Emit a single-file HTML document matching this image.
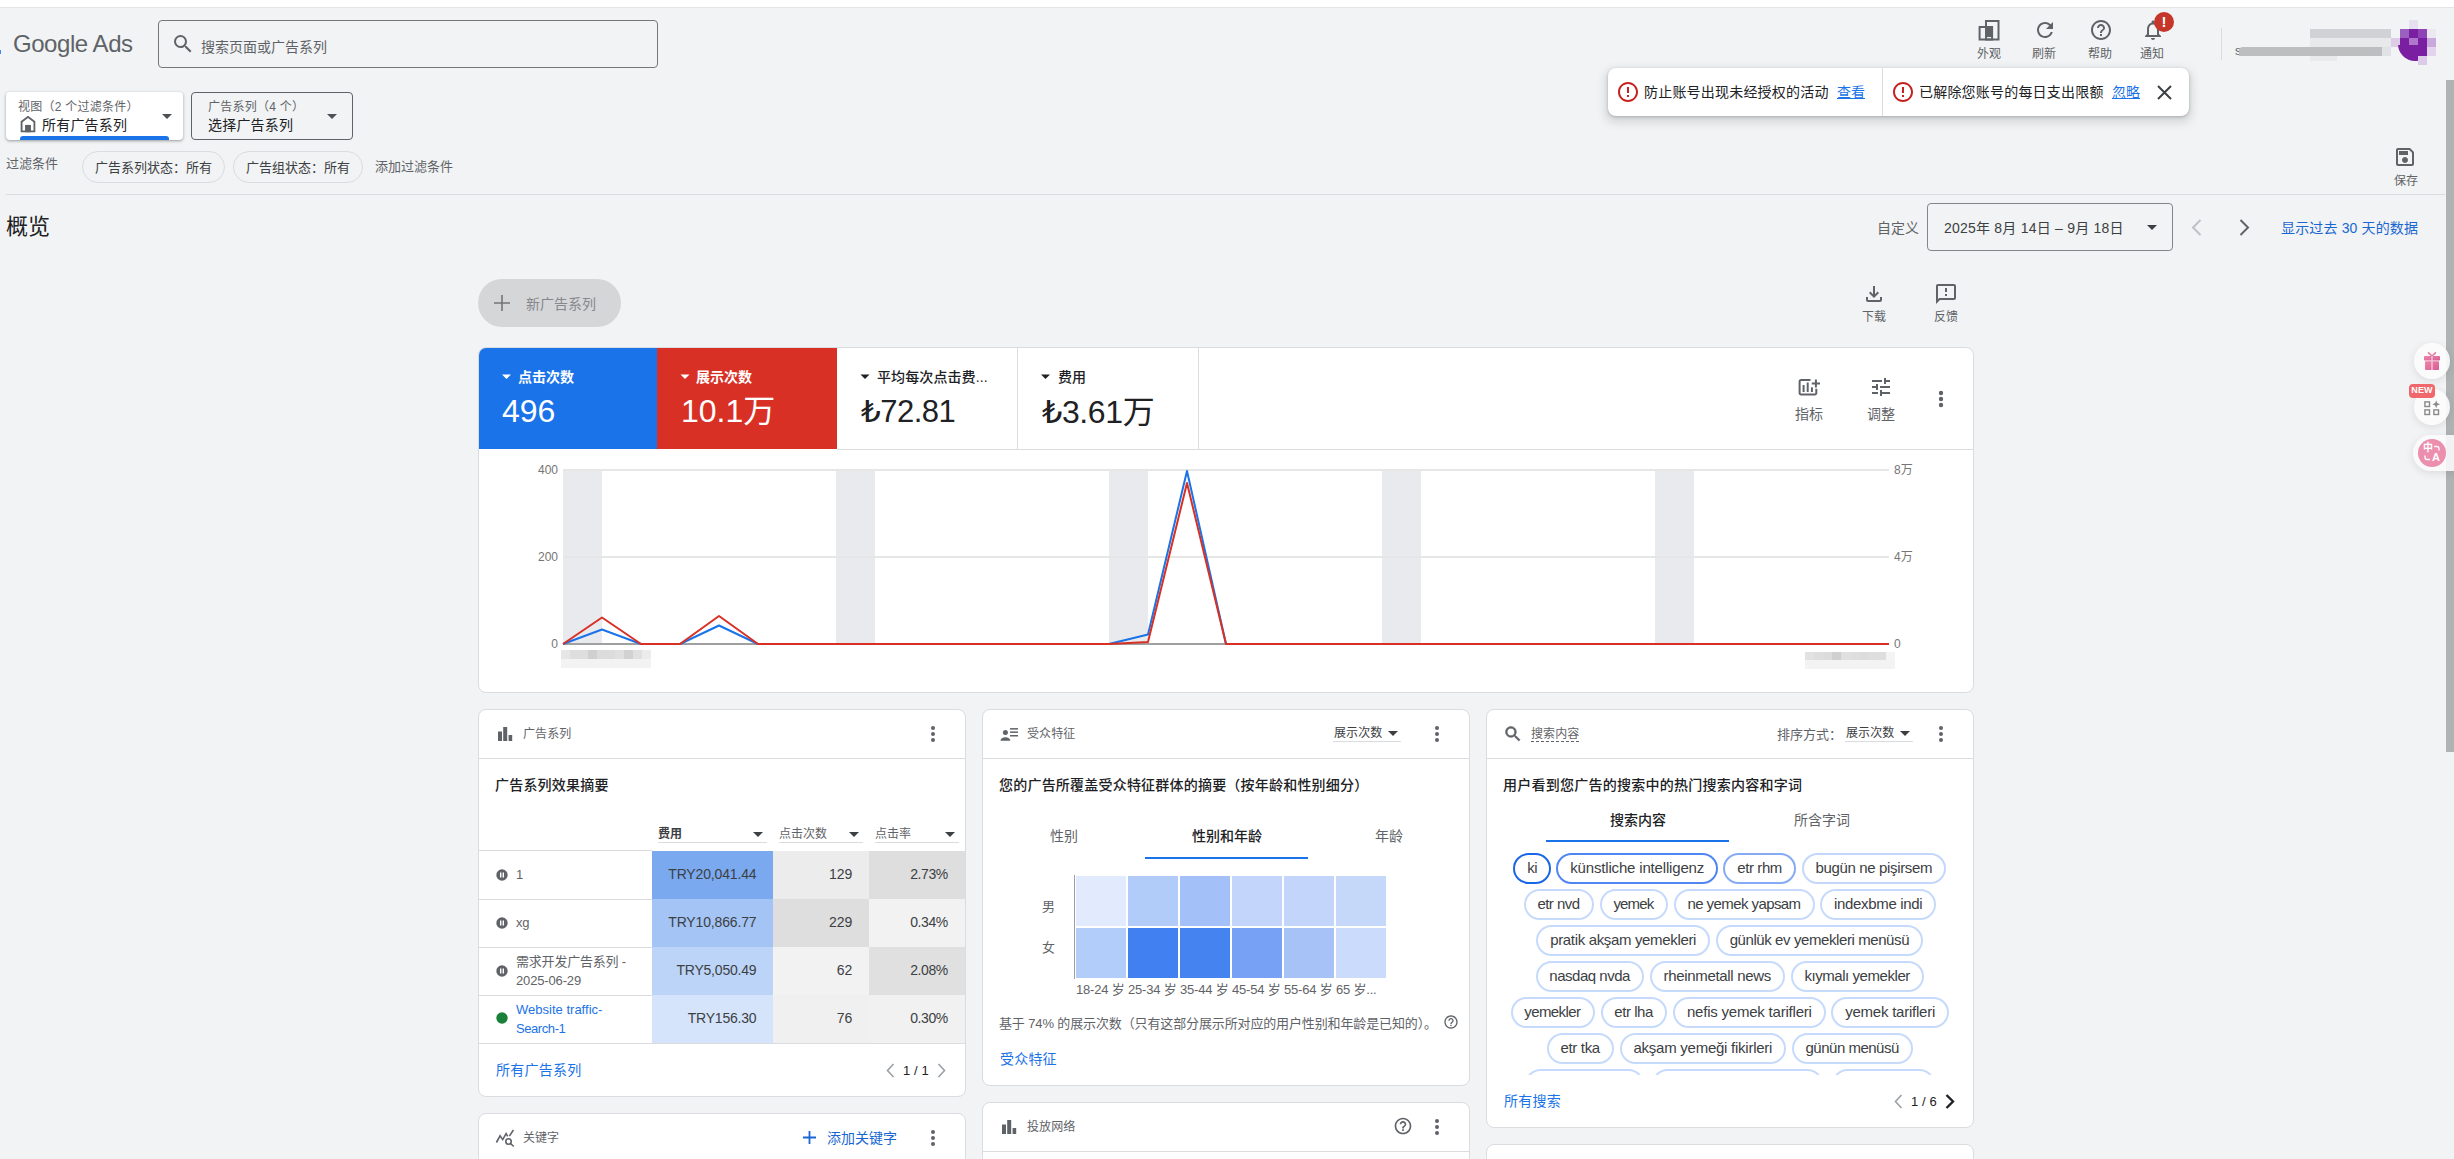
<!DOCTYPE html>
<html lang="zh-CN">
<head>
<meta charset="utf-8">
<title>Google Ads - 概览</title>
<style>
*{box-sizing:border-box;margin:0;padding:0}
html,body{width:2454px;height:1159px;overflow:hidden;background:#f1f3f4}
body{font-family:"Liberation Sans","Noto Sans CJK SC",sans-serif;color:#202124;font-size:14px;position:relative}
.abs{position:absolute}
.t{position:absolute;white-space:nowrap;line-height:1}
.g{color:#5f6368}
.b{color:#1967d2}
.card{position:absolute;background:#fff;border:1px solid #dadce0;border-radius:8px;overflow:hidden}
svg{position:absolute;overflow:visible}
.hr{position:absolute;height:1px;background:#dadce0}
.vr{position:absolute;width:1px;background:#dadce0}
.chip{position:absolute;height:32px;border:1px solid #dadce0;border-radius:16px;font-size:13px;line-height:31px;text-align:center;color:#3c4043;white-space:nowrap}
.tag{position:absolute;height:31px;border:2px solid #c6dafc;border-radius:16px;font-size:15px;line-height:25px;text-align:center;color:#3c4043;white-space:nowrap;background:#fff}
</style>
</head>
<body>
<!-- top browser strip -->
<div class="abs" style="left:0;top:0;width:2454px;height:7px;background:#fff"></div>
<div class="abs" style="left:0;top:7px;width:2454px;height:1px;background:#e3e5e8"></div>

<!-- HEADER -->
<div id="header">
<div class="t g" style="left:13px;top:32px;font-size:24px;letter-spacing:-0.45px">Google Ads</div>
<div class="abs" style="left:158px;top:20px;width:500px;height:48px;border:1px solid #747775;border-radius:4px"></div>
<svg style="left:171px;top:32px" width="24" height="24" viewBox="0 0 24 24"><path fill="#5f6368" d="M15.5 14h-.79l-.28-.27A6.47 6.47 0 0 0 16 9.5 6.5 6.5 0 1 0 9.5 16c1.61 0 3.09-.59 4.23-1.57l.27.28v.79l5 4.99L20.49 19l-4.99-5zm-6 0C7.01 14 5 11.99 5 9.5S7.01 5 9.5 5 14 7.01 14 9.5 11.99 14 9.5 14z"/></svg>
<div class="t g" style="left:201px;top:40px;font-size:14px">搜索页面或广告系列</div>
</div>

<!-- VIEW SELECTORS -->
<div id="selectors">
<div class="abs" style="left:6px;top:92px;width:177px;height:48px;background:#fff;border-radius:4px;box-shadow:0 1px 2px rgba(60,64,67,.3),0 1px 3px 1px rgba(60,64,67,.15)"></div>
<div class="t g" style="left:18px;top:101px;font-size:12px;letter-spacing:0.25px">视图（2 个过滤条件）</div>
<div class="t" style="left:42px;top:118px;font-size:14px;letter-spacing:0.2px">所有广告系列</div>
<div class="abs" style="left:20px;top:136px;width:149px;height:4px;background:#1a73e8;border-radius:3px 3px 0 0"></div>
<div class="abs" style="left:191px;top:92px;width:162px;height:48px;border:1px solid #5f6368;border-radius:4px"></div>
<div class="t g" style="left:208px;top:101px;font-size:12px;letter-spacing:0.25px">广告系列（4 个）</div>
<div class="t" style="left:208px;top:118px;font-size:14px;letter-spacing:0.2px">选择广告系列</div>
<svg style="left:17px;top:113px" width="22" height="22" viewBox="0 0 24 24"><path fill="#5f6368" d="M12 3 4 9v12h16V9l-8-6zm6 16h-3v-6H9v6H6v-9l6-4.5 6 4.5v9z"/><rect x="9" y="13" width="6" height="8" fill="#5f6368"/></svg>
<svg style="left:162px;top:114px" width="10" height="5" viewBox="0 0 10 5"><path fill="#4d5156" d="M0 0h10L5 5z"/></svg>
<svg style="left:327px;top:114px" width="10" height="5" viewBox="0 0 10 5"><path fill="#4d5156" d="M0 0h10L5 5z"/></svg>
</div>

<!-- FILTER ROW -->
<div id="filters">
<div class="t g" style="left:6px;top:157px;font-size:13px">过滤条件</div>
<div class="chip" style="left:82px;top:151px;width:143px">广告系列状态：所有</div>
<div class="chip" style="left:233px;top:151px;width:130px">广告组状态：所有</div>
<div class="t g" style="left:375px;top:160px;font-size:13px">添加过滤条件</div>
<div class="hr" style="left:6px;top:194px;width:2439px"></div>
<div class="t" style="left:6px;top:216px;font-size:22px">概览</div>
</div>

<div id="rheader">
<!-- 外观 -->
<svg style="left:1978px;top:20px" width="22" height="21" viewBox="0 0 22 21"><g fill="none" stroke="#5f6368" stroke-width="2"><rect x="8" y="1" width="12.5" height="18.5"/><rect x="1.6" y="7" width="12.5" height="12.5"/></g><rect x="8" y="7" width="6.2" height="10" fill="#5f6368"/></svg>
<div class="t g" style="left:1977px;top:48px;font-size:12px">外观</div>
<!-- 刷新 -->
<svg style="left:2033px;top:18px" width="24" height="24" viewBox="0 0 24 24"><path fill="#5f6368" d="M17.65 6.35A7.958 7.958 0 0 0 12 4c-4.42 0-7.99 3.58-7.99 8s3.57 8 7.99 8c3.73 0 6.84-2.55 7.73-6h-2.08A5.99 5.99 0 0 1 12 18c-3.31 0-6-2.69-6-6s2.69-6 6-6c1.66 0 3.14.69 4.22 1.78L13 11h7V4l-2.35 2.35z"/></svg>
<div class="t g" style="left:2032px;top:48px;font-size:12px">刷新</div>
<!-- 帮助 -->
<svg style="left:2089px;top:18px" width="24" height="24" viewBox="0 0 24 24"><path fill="#5f6368" d="M11 18h2v-2h-2v2zm1-16C6.48 2 2 6.48 2 12s4.48 10 10 10 10-4.480 10-10S17.52 2 12 2zm0 18c-4.41 0-8-3.590-8-8s3.590-8 8-8 8 3.590 8 8-3.590 8-8 8zm0-14c-2.210 0-4 1.790-4 4h2c0-1.100.9-2 2-2s2 .9 2 2c0 2-3 1.750-3 5h2c0-2.250 3-2.500 3-5 0-2.210-1.790-4-4-4z"/></svg>
<div class="t g" style="left:2088px;top:48px;font-size:12px">帮助</div>
<!-- 通知 -->
<svg style="left:2141px;top:18px" width="24" height="24" viewBox="0 0 24 24"><path fill="#5f6368" d="M12 22c1.100 0 2-.9 2-2h-4c0 1.100.9 2 2 2zm6-6v-5c0-3.070-1.630-5.640-4.500-6.320V4c0-.83-.67-1.500-1.500-1.500s-1.500.67-1.500 1.500v.68C7.640 5.360 6 7.920 6 11v5l-2 2v1h16v-1l-2-2zm-2 1H8v-6c0-2.480 1.510-4.500 4-4.500s4 2.020 4 4.500v6z"/></svg>
<div class="abs" style="left:2154px;top:12px;width:20px;height:20px;border-radius:50%;background:#c5352a"></div>
<div class="t" style="left:2154px;top:14px;width:20px;text-align:center;color:#fff;font-size:15px;font-weight:bold">!</div>
<div class="t g" style="left:2140px;top:48px;font-size:12px">通知</div>
<div class="vr" style="left:2221px;top:28px;height:32px"></div>
<!-- blurred account -->
<div class="t g" style="left:2235px;top:45px;font-size:12px">s</div>
<div class="abs" style="left:2239px;top:47px;width:143px;height:9px;background:#bdbec0;border-radius:4px 0 0 0"></div>
<div class="abs" style="left:2382px;top:47px;width:9px;height:9px;background:#e1e2e5"></div>
<div class="abs" style="left:2310px;top:29px;width:81px;height:9px;background:#d0d2d5"></div>
<div class="abs" style="left:2310px;top:38px;width:81px;height:9px;background:#e8e9ea"></div>
<div class="abs" style="left:2310px;top:56px;width:27px;height:5px;background:#e8eaeb"></div>
<!-- avatar mosaic -->
<div class="abs" style="left:2409px;top:20px;width:9px;height:9px;background:#e6dff0"></div>
<div class="abs" style="left:2400px;top:29px;width:9px;height:9px;background:#9b5fc0"></div>
<div class="abs" style="left:2409px;top:29px;width:9px;height:9px;background:#7b1fa2"></div>
<div class="abs" style="left:2418px;top:29px;width:9px;height:9px;background:#8e44b4"></div>
<div class="abs" style="left:2427px;top:29px;width:9px;height:9px;background:#ece8f2"></div>
<div class="abs" style="left:2391px;top:38px;width:9px;height:9px;background:#dccce8"></div>
<div class="abs" style="left:2400px;top:38px;width:9px;height:9px;background:#7b1fa2"></div>
<div class="abs" style="left:2409px;top:38px;width:9px;height:9px;background:#ae77cb"></div>
<div class="abs" style="left:2418px;top:38px;width:9px;height:18px;background:#7b1fa2"></div>
<div class="abs" style="left:2427px;top:38px;width:9px;height:9px;background:#c9a8dc"></div>
<div class="abs" style="left:2427px;top:47px;width:9px;height:9px;background:#e2d4ec"></div>
<div class="abs" style="left:2418px;top:56px;width:9px;height:9px;background:#dccbe8"></div>
<div class="abs" style="left:2398px;top:45px;width:20px;height:16px;overflow:hidden"><div class="abs" style="left:0;top:-18px;width:34px;height:34px;border-radius:50%;background:#7b1fa2"></div></div>
<!-- toast -->
<div class="abs" style="left:1608px;top:68px;width:581px;height:48px;background:#fff;border-radius:8px;box-shadow:0 1px 3px rgba(60,64,67,.3),0 4px 8px 3px rgba(60,64,67,.15)"></div>
<div class="vr" style="left:1882px;top:68px;height:48px"></div>
<svg style="left:1616px;top:80px" width="24" height="24" viewBox="0 0 24 24"><path fill="#c5221f" d="M11 15h2v2h-2zm0-8h2v6h-2zm.99-5C6.47 2 2 6.48 2 12s4.47 10 9.990 10C17.520 22 22 17.520 22 12S17.520 2 11.990 2zM12 20c-4.420 0-8-3.580-8-8s3.580-8 8-8 8 3.580 8 8-3.580 8-8 8z"/></svg>
<div class="t" style="left:1644px;top:85px;font-size:14px;letter-spacing:0.2px">防止账号出现未经授权的活动</div>
<div class="t" style="left:1837px;top:85px;font-size:14px;color:#1a73e8;text-decoration:underline">查看</div>
<svg style="left:1891px;top:80px" width="24" height="24" viewBox="0 0 24 24"><path fill="#c5221f" d="M11 15h2v2h-2zm0-8h2v6h-2zm.99-5C6.47 2 2 6.48 2 12s4.47 10 9.990 10C17.520 22 22 17.520 22 12S17.520 2 11.990 2zM12 20c-4.420 0-8-3.580-8-8s3.580-8 8-8 8 3.580 8 8-3.580 8-8 8z"/></svg>
<div class="t" style="left:1919px;top:85px;font-size:14px;letter-spacing:0.2px">已解除您账号的每日支出限额</div>
<div class="t" style="left:2112px;top:85px;font-size:14px;color:#1a73e8;text-decoration:underline">忽略</div>
<svg style="left:2157px;top:85px" width="15" height="15" viewBox="0 0 15 15"><path d="M1 1l13 13M14 1L1 14" stroke="#3c4043" stroke-width="2" fill="none"/></svg>
<!-- save -->
<svg style="left:2393px;top:145px" width="24" height="24" viewBox="0 0 24 24"><path fill="#5f6368" d="M17 3H5a2 2 0 0 0-2 2v14a2 2 0 0 0 2 2h14c1.100 0 2-.9 2-2V7l-4-4zm2 16H5V5h11.170L19 7.830V19zm-7-7c-1.660 0-3 1.340-3 3s1.340 3 3 3 3-1.340 3-3-1.340-3-3-3zM6 6h9v4H6z"/></svg>
<div class="t g" style="left:2394px;top:175px;font-size:12px">保存</div>
<!-- date range -->
<div class="t g" style="left:1877px;top:221px;font-size:14px">自定义</div>
<div class="abs" style="left:1927px;top:203px;width:246px;height:48px;border:1px solid #80868b;border-radius:4px"></div>
<div class="t" style="left:1944px;top:221px;font-size:14px;letter-spacing:0.22px;color:#3c4043">2025年 8月 14日 – 9月 18日</div>
<svg style="left:2147px;top:225px" width="10" height="5" viewBox="0 0 10 5"><path fill="#3c4043" d="M0 0h10L5 5z"/></svg>
<svg style="left:2191px;top:219px" width="11" height="17" viewBox="0 0 11 17"><path d="M9.500 1 2 8.500 9.500 16" stroke="#bdc1c6" stroke-width="2" fill="none"/></svg>
<svg style="left:2239px;top:219px" width="11" height="17" viewBox="0 0 11 17"><path d="M1.500 1 9 8.500 1.500 16" stroke="#5f6368" stroke-width="2" fill="none"/></svg>
<div class="t b" style="left:2281px;top:221px;font-size:14px;letter-spacing:0.15px">显示过去 30 天的数据</div>
<!-- scrollbar -->
<div class="abs" style="left:2446px;top:80px;width:8px;height:672px;background:#b1b2b4"></div>
</div>
<!--RIGHTHEADER-->
<div id="main">
<div class="abs" style="left:478px;top:279px;width:143px;height:48px;border-radius:24px;background:#d5d6d8"></div>
<svg style="left:494px;top:295px" width="16" height="16" viewBox="0 0 16 16"><path d="M8 0v16M0 8h16" stroke="#757575" stroke-width="1.600" fill="none"/></svg>
<div class="t" style="left:526px;top:297px;font-size:14px;color:#85888c">新广告系列</div>
<!-- download / feedback -->
<svg style="left:1862px;top:282px" width="24" height="24" viewBox="0 0 24 24"><path fill="#5f6368" d="M18 15v3H6v-3H4v3c0 1.100.9 2 2 2h12c1.100 0 2-.9 2-2v-3h-2zm-1-4-1.410-1.410L13 12.170V4h-2v8.170L8.410 9.590 7 11l5 5 5-5z"/></svg>
<div class="t g" style="left:1862px;top:311px;font-size:12px">下载</div>
<svg style="left:1934px;top:282px" width="24" height="24" viewBox="0 0 24 24"><path fill="#5f6368" d="M20 2H4c-1.100 0-1.990.9-1.990 2L2 22l4-4h14c1.100 0 2-.9 2-2V4c0-1.100-.9-2-2-2zm0 14H5.170L4 17.170V4h16v12zm-9-4h2v2h-2zm0-6h2v4h-2z"/></svg>
<div class="t g" style="left:1934px;top:311px;font-size:12px">反馈</div>
<!-- big card -->
<div class="card" style="left:478px;top:347px;width:1496px;height:346px">
<div class="abs" style="left:0;top:0;width:178px;height:101px;background:#1a73e8"></div>
<div class="abs" style="left:178px;top:0;width:180px;height:101px;background:#d93025"></div>
<div class="vr" style="left:538px;top:0;height:101px"></div>
<div class="vr" style="left:719px;top:0;height:101px"></div>
<div class="hr" style="left:358px;top:101px;width:1140px"></div>
</div>
<svg style="left:479px;top:348px" width="1495" height="344" viewBox="0 0 1495 344">
<g fill="#fff"><path d="M23 26.500h9l-4.500 4.500z"/><path d="M201.500 26.500h9l-4.500 4.500z"/></g>
<g fill="#202124"><path d="M381.500 26.500h9l-4.500 4.500z"/><path d="M562 26.500h9l-4.500 4.500z"/></g>
<rect x="84" y="121" width="39" height="174" fill="#e8eaed"/><rect x="357" y="121" width="39" height="174" fill="#e8eaed"/><rect x="630" y="121" width="39" height="174" fill="#e8eaed"/><rect x="903" y="121" width="39" height="174" fill="#e8eaed"/><rect x="1176" y="121" width="39" height="174" fill="#e8eaed"/>
<g stroke="#e6e6e6" stroke-width="2"><path d="M84 122H1410"/><path d="M84 209H1410"/></g>
<path d="M84 296H1410" stroke="#a0a0a0" stroke-width="2"/>
<polyline points="84.0,296.0 123.0,281.5 162.0,296.0 201.0,296.0 240.0,277.5 279.0,296.0 630.0,296.0 669.0,286.5 708.0,123.0 747.0,296.0 1410.0,296.0" fill="none" stroke="#1a73e8" stroke-width="2" stroke-linejoin="round"/>
<polyline points="84.0,296.0 123.0,269.5 162.0,296.0 201.0,296.0 240.0,268.0 279.0,296.0 630.0,296.0 669.0,294.0 708.0,135.0 747.0,296.0 1410.0,296.0" fill="none" stroke="#d93025" stroke-width="2" stroke-linejoin="round"/>
<g font-size="12" fill="#757575" text-anchor="end"><text x="79" y="126">400</text><text x="79" y="213">200</text><text x="79" y="300">0</text></g>
<g font-size="12" fill="#757575"><text x="1415" y="126">8万</text><text x="1415" y="213">4万</text><text x="1415" y="300">0</text></g>
<rect x="82" y="302" width="9" height="9" fill="#e6e6e6"/><rect x="91" y="302" width="9" height="9" fill="#dedede"/><rect x="100" y="302" width="9" height="9" fill="#dedede"/><rect x="109" y="302" width="9" height="9" fill="#d0d0d0"/><rect x="118" y="302" width="9" height="9" fill="#dcdcdc"/><rect x="127" y="302" width="9" height="9" fill="#dcdcdc"/><rect x="136" y="302" width="9" height="9" fill="#e0e0e0"/><rect x="145" y="302" width="9" height="9" fill="#d2d2d2"/><rect x="154" y="302" width="9" height="9" fill="#e0e0e0"/><rect x="163" y="302" width="9" height="9" fill="#ececec"/><rect x="82" y="311" width="90" height="9" fill="#f3f3f3"/><rect x="1326" y="304" width="9" height="8" fill="#e2e2e2"/><rect x="1335" y="304" width="9" height="8" fill="#dedede"/><rect x="1344" y="304" width="9" height="8" fill="#dcdcdc"/><rect x="1353" y="304" width="9" height="8" fill="#d0d0d0"/><rect x="1362" y="304" width="9" height="8" fill="#e0e0e0"/><rect x="1371" y="304" width="9" height="8" fill="#dedede"/><rect x="1380" y="304" width="9" height="8" fill="#dcdcdc"/><rect x="1389" y="304" width="9" height="8" fill="#dedede"/><rect x="1398" y="304" width="9" height="8" fill="#dedede"/><rect x="1407" y="304" width="9" height="8" fill="#f4f4f4"/><rect x="1326" y="312" width="90" height="9" fill="#f3f3f3"/>
</svg>
<div class="t" style="left:518px;top:370px;font-size:14px;font-weight:bold;color:#fff">点击次数</div>
<div class="t" style="left:502px;top:395px;font-size:32px;color:#fff">496</div>
<div class="t" style="left:696px;top:370px;font-size:14px;font-weight:bold;color:#fff">展示次数</div>
<div class="t" style="left:681px;top:395px;font-size:32px;color:#fff">10.1万</div>
<div class="t" style="left:877px;top:370px;font-size:14px;font-weight:500;letter-spacing:0.1px">平均每次点击费...</div>
<div class="t" style="left:861px;top:396px;font-size:31px;letter-spacing:-0.5px;font-family:'Liberation Sans','DejaVu Sans','Noto Sans CJK SC',sans-serif">₺72.81</div>
<div class="t" style="left:1058px;top:370px;font-size:14px;font-weight:500;letter-spacing:0.1px">费用</div>
<div class="t" style="left:1042px;top:396px;font-size:32px;letter-spacing:-0.4px;font-family:'Liberation Sans','DejaVu Sans','Noto Sans CJK SC',sans-serif">₺3.61万</div>
<!-- 指标 / 调整 / more -->
<svg style="left:1798px;top:378px" width="22" height="19" viewBox="0 0 22 19"><g fill="none" stroke="#5f6368" stroke-width="2"><path d="M12.500 2H3.100a1.500 1.500 0 0 0-1.500 1.500v11.600a1.500 1.500 0 0 0 1.500 1.500h13.700a1.500 1.500 0 0 0 1.500-1.500V10.800"/><path d="M17.900 1.400v8.200M13.800 5.500H22"/></g><g fill="#5f6368"><rect x="4.600" y="7" width="2" height="7"/><rect x="8.700" y="4.500" width="2" height="9.500"/><rect x="12.900" y="9.300" width="2" height="4.700"/></g></svg>
<div class="t g" style="left:1795px;top:407px;font-size:14px">指标</div>
<svg style="left:1869px;top:375px" width="24" height="24" viewBox="0 0 24 24"><path fill="#5f6368" d="M3 17v2h6v-2H3zM3 5v2h10V5H3zm10 16v-2h8v-2h-8v-2h-2v6h2zM7 9v2H3v2h4v2h2V9H7zm14 4v-2H11v2h10zm-6-4h2V7h4V5h-4V3h-2v6z"/></svg>
<div class="t g" style="left:1867px;top:407px;font-size:14px">调整</div>
<svg style="left:1938px;top:390px" width="6" height="18" viewBox="0 0 6 18"><g fill="#5f6368"><circle cx="3" cy="3" r="2.200"/><circle cx="3" cy="9" r="2.200"/><circle cx="3" cy="15" r="2.200"/></g></svg>
</div>
<!--MAIN-->
<!--CARDS-START-->
<div id="cardA">
<div class="card" style="left:478px;top:709px;width:488px;height:388px">
<div class="hr" style="left:0;top:48px;width:488px"></div>
<div class="abs" style="left:173px;top:141px;width:121px;height:48px;background:#7aa9f0"></div>
<div class="abs" style="left:294px;top:141px;width:96px;height:48px;background:#ececec"></div>
<div class="abs" style="left:390px;top:141px;width:97px;height:48px;background:#dedede"></div>
<div class="abs" style="left:173px;top:189px;width:121px;height:48px;background:#a3c4f5"></div>
<div class="abs" style="left:294px;top:189px;width:96px;height:48px;background:#dedede"></div>
<div class="abs" style="left:390px;top:189px;width:97px;height:48px;background:#f2f2f2"></div>
<div class="abs" style="left:173px;top:237px;width:121px;height:48px;background:#bcd4f7"></div>
<div class="abs" style="left:294px;top:237px;width:96px;height:48px;background:#f2f2f2"></div>
<div class="abs" style="left:390px;top:237px;width:97px;height:48px;background:#e0e0e0"></div>
<div class="abs" style="left:173px;top:285px;width:121px;height:48px;background:#d5e4fb"></div>
<div class="abs" style="left:294px;top:285px;width:96px;height:48px;background:#f0f0f0"></div>
<div class="abs" style="left:390px;top:285px;width:97px;height:48px;background:#f1f1f1"></div>
<div class="hr" style="left:0;top:140px;width:173px"></div>
<div class="hr" style="left:0;top:189px;width:173px"></div>
<div class="hr" style="left:0;top:237px;width:173px"></div>
<div class="hr" style="left:0;top:285px;width:173px"></div>
<div class="hr" style="left:0;top:333px;width:488px"></div>
<div class="hr" style="left:179px;top:132px;width:109px"></div>
<div class="hr" style="left:300px;top:132px;width:84px"></div>
<div class="hr" style="left:396px;top:132px;width:84px"></div>
</div>
<svg style="left:498px;top:727px" width="15" height="14" viewBox="0 0 15 14"><g fill="#5f6368"><rect x="0" y="4.500" width="4" height="9.500"/><rect x="5.200" y="0" width="4" height="14"/><rect x="10.600" y="8" width="3.600" height="6"/></g></svg>
<div class="t g" style="left:523px;top:728px;font-size:12px;letter-spacing:0.1px">广告系列</div>
<svg style="left:930px;top:725px" width="6" height="18" viewBox="0 0 6 18"><g fill="#5f6368"><circle cx="3" cy="3" r="2"/><circle cx="3" cy="9" r="2"/><circle cx="3" cy="15" r="2"/></g></svg>
<div class="t" style="left:495px;top:778px;font-size:14px;letter-spacing:0.2px;font-weight:500">广告系列效果摘要</div>
<div class="t" style="left:658px;top:828px;font-size:12px;font-weight:bold;color:#3c4043">费用</div>
<div class="t g" style="left:779px;top:828px;font-size:12px">点击次数</div>
<div class="t g" style="left:875px;top:828px;font-size:12px">点击率</div>
<svg style="left:753px;top:832px" width="10" height="5" viewBox="0 0 10 5"><path fill="#3c4043" d="M0 0h10L5 5z"/></svg>
<svg style="left:849px;top:832px" width="10" height="5" viewBox="0 0 10 5"><path fill="#3c4043" d="M0 0h10L5 5z"/></svg>
<svg style="left:945px;top:832px" width="10" height="5" viewBox="0 0 10 5"><path fill="#3c4043" d="M0 0h10L5 5z"/></svg>
<div class="t" style="right:1697.4px;top:867px;font-size:14px;letter-spacing:-0.15px;margin-right:0.15px;color:#3c4043">TRY20,041.44</div>
<div class="t" style="right:1601.6px;top:867px;font-size:14px;letter-spacing:0.05px;margin-right:-0.05px;color:#3c4043">129</div>
<div class="t" style="right:1505.8px;top:867px;font-size:14px;letter-spacing:-0.44px;margin-right:0.44px;color:#3c4043">2.73%</div>
<div class="t" style="right:1697.4px;top:915px;font-size:14px;letter-spacing:-0.15px;margin-right:0.15px;color:#3c4043">TRY10,866.77</div>
<div class="t" style="right:1601.6px;top:915px;font-size:14px;letter-spacing:0.05px;margin-right:-0.05px;color:#3c4043">229</div>
<div class="t" style="right:1505.8px;top:915px;font-size:14px;letter-spacing:-0.44px;margin-right:0.44px;color:#3c4043">0.34%</div>
<div class="t" style="right:1697.4px;top:963px;font-size:14px;letter-spacing:-0.20px;margin-right:0.20px;color:#3c4043">TRY5,050.49</div>
<div class="t" style="right:1601.6px;top:963px;font-size:14px;letter-spacing:0.01px;margin-right:-0.01px;color:#3c4043">62</div>
<div class="t" style="right:1505.8px;top:963px;font-size:14px;letter-spacing:-0.44px;margin-right:0.44px;color:#3c4043">2.08%</div>
<div class="t" style="right:1697.4px;top:1011px;font-size:14px;letter-spacing:-0.21px;margin-right:0.21px;color:#3c4043">TRY156.30</div>
<div class="t" style="right:1601.6px;top:1011px;font-size:14px;letter-spacing:0.01px;margin-right:-0.01px;color:#3c4043">76</div>
<div class="t" style="right:1505.8px;top:1011px;font-size:14px;letter-spacing:-0.44px;margin-right:0.44px;color:#3c4043">0.30%</div>
<svg style="left:496px;top:869px" width="12" height="12" viewBox="0 0 12 12"><circle cx="6" cy="6" r="5.700" fill="#5f6368"/><rect x="4" y="3.500" width="1.400" height="5" fill="#fff"/><rect x="6.600" y="3.500" width="1.400" height="5" fill="#fff"/></svg>
<svg style="left:496px;top:917px" width="12" height="12" viewBox="0 0 12 12"><circle cx="6" cy="6" r="5.700" fill="#5f6368"/><rect x="4" y="3.500" width="1.400" height="5" fill="#fff"/><rect x="6.600" y="3.500" width="1.400" height="5" fill="#fff"/></svg>
<svg style="left:496px;top:965px" width="12" height="12" viewBox="0 0 12 12"><circle cx="6" cy="6" r="5.700" fill="#5f6368"/><rect x="4" y="3.500" width="1.400" height="5" fill="#fff"/><rect x="6.600" y="3.500" width="1.400" height="5" fill="#fff"/></svg>
<svg style="left:496px;top:1012px" width="12" height="12" viewBox="0 0 12 12"><circle cx="6" cy="6" r="5.700" fill="#188038"/></svg>
<div class="t g" style="left:516px;top:868px;font-size:13px">1</div>
<div class="t g" style="left:516px;top:916px;font-size:13px;letter-spacing:-0.27px">xg</div>
<div class="t g" style="left:516px;top:955px;font-size:13px;letter-spacing:-0.2px">需求开发广告系列 -</div>
<div class="t g" style="left:516px;top:974px;font-size:13px;letter-spacing:-0.15px">2025-06-29</div>
<div class="t" style="left:516px;top:1003px;font-size:13px;color:#1a73e8;letter-spacing:0.01px">Website traffic-</div>
<div class="t" style="left:516px;top:1022px;font-size:13px;color:#1a73e8;letter-spacing:-0.42px">Search-1</div>
<div class="t" style="color:#1a73e8;left:496px;top:1063px;font-size:14px;letter-spacing:0.25px">所有广告系列</div>
<svg style="left:886px;top:1063px" width="9" height="15" viewBox="0 0 9 15"><path d="M7.500 1 1.500 7.500 7.500 14" stroke="#9aa0a6" stroke-width="1.600" fill="none"/></svg>
<div class="t" style="left:903px;top:1064px;font-size:13px;color:#202124;letter-spacing:0.1px">1 / 1</div>
<svg style="left:937px;top:1063px" width="9" height="15" viewBox="0 0 9 15"><path d="M1.500 1 7.500 7.500 1.500 14" stroke="#9aa0a6" stroke-width="1.600" fill="none"/></svg>
</div>
<div id="cardB">
<div class="card" style="left:982px;top:709px;width:488px;height:377px">
<div class="hr" style="left:0;top:48px;width:488px"></div>
<div class="hr" style="left:350px;top:31px;width:68px"></div>
<div class="abs" style="left:91px;top:165px;width:1px;height:104px;background:#9aa0a6"></div>
<div class="abs" style="left:93px;top:166px;width:50px;height:50px;background:#e1ebfd"></div>
<div class="abs" style="left:145px;top:166px;width:50px;height:50px;background:#b2ccf9"></div>
<div class="abs" style="left:197px;top:166px;width:50px;height:50px;background:#a3c1f8"></div>
<div class="abs" style="left:249px;top:166px;width:50px;height:50px;background:#c3d5fa"></div>
<div class="abs" style="left:301px;top:166px;width:50px;height:50px;background:#c3d5fa"></div>
<div class="abs" style="left:353px;top:166px;width:50px;height:50px;background:#c6d8fa"></div>
<div class="abs" style="left:93px;top:218px;width:50px;height:50px;background:#b2cdfa"></div>
<div class="abs" style="left:145px;top:218px;width:50px;height:50px;background:#4180f0"></div>
<div class="abs" style="left:197px;top:218px;width:50px;height:50px;background:#4583f0"></div>
<div class="abs" style="left:249px;top:218px;width:50px;height:50px;background:#76a1f4"></div>
<div class="abs" style="left:301px;top:218px;width:50px;height:50px;background:#a7c2f6"></div>
<div class="abs" style="left:353px;top:218px;width:50px;height:50px;background:#cbdbfb"></div>
<div class="abs" style="left:162px;top:147px;width:163px;height:2px;background:#1a73e8"></div>
</div>
<svg style="left:1000px;top:727px" width="19" height="15" viewBox="0 0 19 15"><g fill="#5f6368"><circle cx="5.400" cy="5.600" r="2.500"/><path d="M.5 13.800c0-2.400 2.400-3.600 4.900-3.600s4.900 1.200 4.900 3.600z"/><rect x="10" y="1.100" width="8" height="1.500"/><rect x="10" y="4.400" width="8" height="1.500"/><rect x="10" y="8" width="8" height="1.500"/></g></svg>
<div class="t g" style="left:1027px;top:728px;font-size:12px;letter-spacing:0.1px">受众特征</div>
<div class="t" style="left:1334px;top:727px;font-size:12px;letter-spacing:0.1px;color:#3c4043">展示次数</div>
<svg style="left:1388px;top:731px" width="10" height="5" viewBox="0 0 10 5"><path fill="#3c4043" d="M0 0h10L5 5z"/></svg>
<svg style="left:1434px;top:725px" width="6" height="18" viewBox="0 0 6 18"><g fill="#5f6368"><circle cx="3" cy="3" r="2"/><circle cx="3" cy="9" r="2"/><circle cx="3" cy="15" r="2"/></g></svg>
<div class="t" style="left:999px;top:778px;font-size:14px;letter-spacing:0.21px;font-weight:500">您的广告所覆盖受众特征群体的摘要（按年龄和性别细分）</div>
<div class="t g" style="left:1050px;top:829px;font-size:14px">性别</div>
<div class="t" style="left:1192px;top:829px;font-size:14px;font-weight:500">性别和年龄</div>
<div class="t g" style="left:1375px;top:829px;font-size:14px">年龄</div>
<div class="t g" style="left:1042px;top:900px;font-size:13px">男</div>
<div class="t g" style="left:1042px;top:941px;font-size:13px">女</div>
<div class="t g" style="left:1076px;top:983px;font-size:13px;letter-spacing:-0.2px">18-24 岁</div>
<div class="t g" style="left:1128px;top:983px;font-size:13px;letter-spacing:-0.2px">25-34 岁</div>
<div class="t g" style="left:1180px;top:983px;font-size:13px;letter-spacing:-0.2px">35-44 岁</div>
<div class="t g" style="left:1232px;top:983px;font-size:13px;letter-spacing:-0.2px">45-54 岁</div>
<div class="t g" style="left:1284px;top:983px;font-size:13px;letter-spacing:-0.2px">55-64 岁</div>
<div class="t g" style="left:1336px;top:983px;font-size:13px;letter-spacing:-0.2px">65 岁...</div>
<div class="t g" style="left:999px;top:1017px;font-size:13px;letter-spacing:-0.13px">基于 74% 的展示次数（只有这部分展示所对应的用户性别和年龄是已知的）。</div>
<svg style="left:1443px;top:1014px" width="16" height="16" viewBox="0 0 24 24"><path fill="#5f6368" d="M11 18h2v-2h-2v2zm1-16C6.480 2 2 6.480 2 12s4.480 10 10 10 10-4.480 10-10S17.520 2 12 2zm0 18c-4.410 0-8-3.590-8-8s3.590-8 8-8 8 3.590 8 8-3.590 8-8 8zm0-14c-2.210 0-4 1.790-4 4h2c0-1.100.9-2 2-2s2 .9 2 2c0 2-3 1.750-3 5h2c0-2.250 3-2.500 3-5 0-2.210-1.790-4-4-4z"/></svg>
<div class="t" style="color:#1a73e8;left:1000px;top:1052px;font-size:14px;letter-spacing:0.2px">受众特征</div>
</div>
<div id="cardC">
<div class="card" style="left:1486px;top:709px;width:488px;height:419px">
<div class="hr" style="left:0;top:48px;width:488px"></div>
<div class="hr" style="left:358px;top:31px;width:68px"></div>
<div class="abs" style="left:59px;top:130px;width:183px;height:2px;background:#1a73e8"></div>
<div class="abs" style="left:0;top:140px;width:486px;height:225px;overflow:hidden">
<div class="tag" style="left:26.3px;top:3px;width:38.2px;letter-spacing:-0.32px;text-indent:-0.32px;border-color:#1a66e8">ki</div>
<div class="tag" style="left:69.4px;top:3px;width:161.8px;letter-spacing:-0.17px;text-indent:-0.17px;border-color:#4f86f2">künstliche intelligenz</div>
<div class="tag" style="left:236.4px;top:3px;width:72.8px;letter-spacing:-0.39px;text-indent:-0.39px;border-color:#85abf6">etr rhm</div>
<div class="tag" style="left:314.7px;top:3px;width:144.6px;letter-spacing:-0.35px;text-indent:-0.35px;border-color:#c4d7fb">bugün ne pişirsem</div>
<div class="tag" style="left:36.7px;top:39px;width:70.1px;letter-spacing:-0.54px;text-indent:-0.54px">etr nvd</div>
<div class="tag" style="left:112.8px;top:39px;width:68.1px;letter-spacing:-0.82px;text-indent:-0.82px">yemek</div>
<div class="tag" style="left:186.8px;top:39px;width:141.0px;letter-spacing:-0.58px;text-indent:-0.58px">ne yemek yapsam</div>
<div class="tag" style="left:333.3px;top:39px;width:116.1px;letter-spacing:-0.34px;text-indent:-0.34px">indexbme indi</div>
<div class="tag" style="left:49.4px;top:75px;width:173.8px;letter-spacing:-0.34px;text-indent:-0.34px">pratik akşam yemekleri</div>
<div class="tag" style="left:228.8px;top:75px;width:207.5px;letter-spacing:-0.41px;text-indent:-0.41px">günlük ev yemekleri menüsü</div>
<div class="tag" style="left:48.6px;top:111px;width:108.5px;letter-spacing:-0.49px;text-indent:-0.49px">nasdaq nvda</div>
<div class="tag" style="left:162.7px;top:111px;width:135.4px;letter-spacing:-0.32px;text-indent:-0.32px">rheinmetall news</div>
<div class="tag" style="left:303.6px;top:111px;width:133.5px;letter-spacing:-0.44px;text-indent:-0.44px">kıymalı yemekler</div>
<div class="tag" style="left:23.6px;top:147px;width:84.0px;letter-spacing:-0.61px;text-indent:-0.61px">yemekler</div>
<div class="tag" style="left:113.5px;top:147px;width:66.6px;letter-spacing:-0.44px;text-indent:-0.44px">etr lha</div>
<div class="tag" style="left:186.0px;top:147px;width:152.9px;letter-spacing:-0.21px;text-indent:-0.21px">nefis yemek tarifleri</div>
<div class="tag" style="left:344.4px;top:147px;width:117.7px;letter-spacing:-0.24px;text-indent:-0.24px">yemek tarifleri</div>
<div class="tag" style="left:59.7px;top:183px;width:67.3px;letter-spacing:-0.34px;text-indent:-0.34px">etr tka</div>
<div class="tag" style="left:132.6px;top:183px;width:166.7px;letter-spacing:-0.25px;text-indent:-0.25px">akşam yemeği fikirleri</div>
<div class="tag" style="left:304.8px;top:183px;width:121.2px;letter-spacing:-0.50px;text-indent:-0.50px">günün menüsü</div>
<div class="tag" style="left:37.5px;top:219px;width:119.6px;letter-spacing:0.00px;text-indent:0.00px">yemek tarifi</div>
<div class="tag" style="left:165.4px;top:219px;width:171.1px;letter-spacing:-1.17px;text-indent:-1.17px">bugün ne yemek yapsam</div>
<div class="tag" style="left:345.2px;top:219px;width:103.0px;letter-spacing:-0.77px;text-indent:-0.77px">ev yemekleri</div>
</div>
</div>
<svg style="left:1503px;top:724px" width="20" height="20" viewBox="0 0 24 24"><path fill="#5f6368" stroke="#5f6368" stroke-width=".7" d="M15.500 14h-.79l-.28-.27A6.470 6.470 0 0 0 16 9.500 6.500 6.500 0 1 0 9.500 16c1.610 0 3.090-.59 4.230-1.570l.27.28v.79l5 4.990L20.490 19l-4.990-5zm-6 0C7.010 14 5 11.990 5 9.500S7.010 5 9.500 5 14 7.010 14 9.500 11.990 14 9.500 14z"/></svg>
<div class="t g" style="left:1531px;top:728px;font-size:12px;letter-spacing:0.1px;border-bottom:1px dashed #5f6368;padding-bottom:1px">搜索内容</div>
<div class="t g" style="left:1777px;top:728px;font-size:13px">排序方式：</div>
<div class="t" style="left:1846px;top:727px;font-size:12px;letter-spacing:0.1px;color:#3c4043">展示次数</div>
<svg style="left:1900px;top:731px" width="10" height="5" viewBox="0 0 10 5"><path fill="#3c4043" d="M0 0h10L5 5z"/></svg>
<svg style="left:1938px;top:725px" width="6" height="18" viewBox="0 0 6 18"><g fill="#5f6368"><circle cx="3" cy="3" r="2"/><circle cx="3" cy="9" r="2"/><circle cx="3" cy="15" r="2"/></g></svg>
<div class="t" style="left:1503px;top:778px;font-size:14px;letter-spacing:0.25px;font-weight:500">用户看到您广告的搜索中的热门搜索内容和字词</div>
<div class="t" style="left:1610px;top:813px;font-size:14px;font-weight:500">搜索内容</div>
<div class="t g" style="left:1794px;top:813px;font-size:14px">所含字词</div>
<div class="t" style="color:#1a73e8;left:1504px;top:1094px;font-size:14px;letter-spacing:0.25px">所有搜索</div>
<svg style="left:1894px;top:1094px" width="9" height="15" viewBox="0 0 9 15"><path d="M7.500 1 1.500 7.500 7.500 14" stroke="#9aa0a6" stroke-width="1.600" fill="none"/></svg>
<div class="t" style="left:1911px;top:1095px;font-size:13px;color:#202124;letter-spacing:0.1px">1 / 6</div>
<svg style="left:1945px;top:1094px" width="10" height="15" viewBox="0 0 10 15"><path d="M1.500 1 8 7.500 1.500 14" stroke="#202124" stroke-width="2.400" fill="none"/></svg>
</div>
<div id="cardsBottom">
<div class="card" style="left:478px;top:1113px;width:488px;height:80px;border-radius:8px 8px 0 0"></div>
<svg style="left:496px;top:1129px" width="20" height="19" viewBox="0 0 20 19"><g fill="none" stroke="#5f6368" stroke-width="1.600"><path d="M.4 13.500 4.100 6.800 6.700 10.600 10.100 4.700 11.700 7.400"/><path d="M13.400 7.100 17.400 1"/><circle cx="12.500" cy="12.500" r="2.700"/><path d="M14.600 14.700 17.800 17.500"/></g></svg>
<div class="t g" style="left:523px;top:1132px;font-size:12px">关键字</div>
<svg style="left:803px;top:1131px" width="13" height="13" viewBox="0 0 13 13"><path d="M6.500 0v13M0 6.500h13" stroke="#1967d2" stroke-width="1.800" fill="none"/></svg>
<div class="t b" style="left:827px;top:1131px;font-size:14px">添加关键字</div>
<svg style="left:930px;top:1129px" width="6" height="18" viewBox="0 0 6 18"><g fill="#5f6368"><circle cx="3" cy="3" r="2"/><circle cx="3" cy="9" r="2"/><circle cx="3" cy="15" r="2"/></g></svg>
<div class="card" style="left:982px;top:1102px;width:488px;height:80px;border-radius:8px 8px 0 0"><div class="hr" style="left:0;top:48px;width:488px"></div></div>
<svg style="left:1002px;top:1120px" width="15" height="14" viewBox="0 0 15 14"><g fill="#5f6368"><rect x="0" y="4.500" width="4" height="9.500"/><rect x="5.200" y="0" width="4" height="14"/><rect x="10.600" y="8" width="3.600" height="6"/></g></svg>
<div class="t g" style="left:1027px;top:1121px;font-size:12px;letter-spacing:0.1px">投放网络</div>
<svg style="left:1393px;top:1116px" width="20" height="20" viewBox="0 0 24 24"><path fill="#5f6368" d="M11 18h2v-2h-2v2zm1-16C6.480 2 2 6.480 2 12s4.480 10 10 10 10-4.480 10-10S17.520 2 12 2zm0 18c-4.410 0-8-3.590-8-8s3.590-8 8-8 8 3.590 8 8-3.590 8-8 8zm0-14c-2.210 0-4 1.790-4 4h2c0-1.100.9-2 2-2s2 .9 2 2c0 2-3 1.750-3 5h2c0-2.250 3-2.500 3-5 0-2.210-1.790-4-4-4z"/></svg>
<svg style="left:1434px;top:1118px" width="6" height="18" viewBox="0 0 6 18"><g fill="#5f6368"><circle cx="3" cy="3" r="2"/><circle cx="3" cy="9" r="2"/><circle cx="3" cy="15" r="2"/></g></svg>
<div class="card" style="left:1486px;top:1144px;width:488px;height:60px;border-radius:8px 8px 0 0"></div>
</div>
<!--CARDS-END-->
<div id="floaters">
<div class="abs" style="left:2414px;top:343px;width:36px;height:36px;border-radius:50%;background:rgba(252,252,252,.9);box-shadow:0 2px 8px rgba(0,0,0,.10)"></div>
<svg style="left:2423px;top:351px" width="18" height="20" viewBox="0 0 18 20"><defs><linearGradient id="gg" x1="0" y1="0" x2="1" y2="1"><stop offset="0" stop-color="#ee86a6"/><stop offset="1" stop-color="#d85c98"/></linearGradient></defs><g fill="url(#gg)"><rect x="1" y="5" width="16" height="4.500" rx=".8"/><rect x="2" y="10.300" width="14" height="8.700" rx=".8"/></g><path d="M9 5 5.500 1.800M9 5l3.500-3.200" stroke="#e57ba0" stroke-width="1.600" fill="none" stroke-linecap="round"/><rect x="8.300" y="5" width="1.400" height="14" fill="#f7c6d6"/></svg>
<div class="abs" style="left:2414px;top:389px;width:36px;height:36px;border-radius:50%;background:rgba(252,252,252,.9);box-shadow:0 2px 8px rgba(0,0,0,.10)"></div>
<svg style="left:2424px;top:399px" width="16" height="17" viewBox="0 0 16 17"><g fill="none" stroke="#8a8a8a" stroke-width="1.400"><rect x=".9" y="2.900" width="4.600" height="4.600"/><rect x=".9" y="10.900" width="4.600" height="4.600"/><rect x="9.900" y="10.900" width="4.600" height="4.600"/></g><path d="M12.200 1.200 13.200 4 16 5.200 13.200 6.400 12.200 9.200 11.200 6.400 8.400 5.200 11.200 4z" fill="#8a8a8a"/></svg>
<div class="abs" style="left:2409px;top:384px;width:26px;height:14px;border-radius:4px;background:#f0686c"></div>
<div class="t" style="left:2409px;top:386px;width:26px;text-align:center;font-size:9px;font-weight:bold;color:#fff;letter-spacing:.1px">NEW</div>
<div class="abs" style="left:2413px;top:435px;width:60px;height:36px;border-radius:18px;background:rgba(250,250,250,.88);box-shadow:0 2px 8px rgba(0,0,0,.10)"></div>
<div class="abs" style="left:2418px;top:439px;width:28px;height:28px;border-radius:50%;background:#ec8fae"></div>
<div class="t" style="left:2423px;top:443px;font-size:10px;font-weight:bold;color:#fff">中</div>
<div class="t" style="left:2432px;top:452px;font-size:11px;font-weight:bold;color:#fff">A</div>
<svg style="left:2418px;top:439px" width="28" height="28" viewBox="0 0 28 28"><g fill="none" stroke="#fff" stroke-width="1.300" stroke-linecap="round"><path d="M16.500 7.500h2.500a2 2 0 0 1 2 2v1.500"/><path d="M11.500 20.500H9a2 2 0 0 1-2-2V17"/></g></svg>
<div class="abs" style="left:0;top:50px;width:1px;height:4px;background:#4285f4"></div>
</div>
<!--FLOAT-->
</body>
</html>
